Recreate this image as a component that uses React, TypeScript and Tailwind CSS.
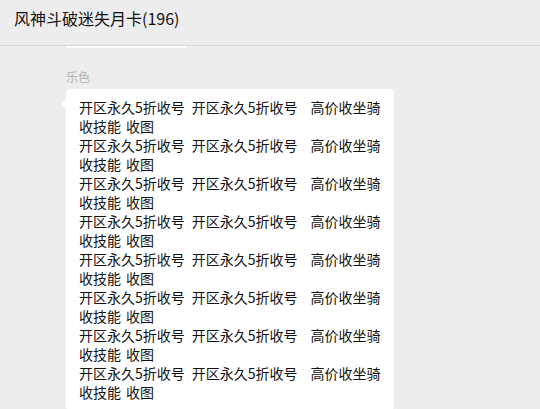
const FONT = { fontFamily: '"Microsoft YaHei", "Noto Sans CJK SC", sans-serif' };

function MessageLines() {
  // 8 repeats of the same advert, each wrapping into two lines
  const rows = Array.from({ length: 8 });
  return (
    <div className="text-[14px] leading-[19px] text-[#111]">
      {rows.map((_, i) => (
        <div key={i}>
          <div className="flex whitespace-nowrap">
            <span>开区永久5折收号</span>
            <span className="ml-[7px]">开区永久5折收号</span>
            <span className="ml-[13px]">高价收坐骑</span>
          </div>
          <div className="flex whitespace-nowrap">
            <span>收技能</span>
            <span className="ml-[5px]">收图</span>
          </div>
        </div>
      ))}
    </div>
  );
}

export default function App() {
  return (
    <div className="w-[540px] h-[409px] overflow-hidden bg-[#ededed]" style={FONT}>
      {/* Chat header */}
      <div className="h-[46px] border-b border-[#d5d5d5] flex items-center pl-[14px] pb-[9px]">
        <span className="text-[16px] text-[#111]">风神斗破迷失月卡(196)</span>
      </div>

      <div className="pl-[66px]">
        {/* tail end of the previous bubble */}
        <div className="w-[121px] h-[2px] bg-white rounded-b-[3px]" />

        {/* sender name */}
        <div className="mt-[21px] text-[12px] leading-[16px] text-[#b2b2b2]">乐色</div>

        {/* bubble */}
        <div className="relative mt-[4px] w-[328px] bg-white rounded-[4px] pl-[13px] pt-[9px] pb-[8px]">
          <div className="absolute left-[-4px] top-[10px] w-0 h-0 border-y-[5px] border-y-transparent border-r-[4px] border-r-white" />
          <MessageLines />
        </div>
      </div>
    </div>
  );
}
